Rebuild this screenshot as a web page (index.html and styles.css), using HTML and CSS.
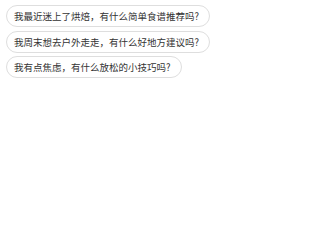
FILE: index.html
```html
<!DOCTYPE html>
<html lang="zh">
<head>
<meta charset="utf-8">
<link rel="stylesheet" href="styles.css">
</head>
<body>
<div class="suggestions">
  <div class="chip">我最近迷上了烘焙，有什么简单食谱推荐吗?</div>
  <div class="chip">我周末想去户外走走，有什么好地方建议吗?</div>
  <div class="chip">我有点焦虑，有什么放松的小技巧吗?</div>
</div>
</body>
</html>
```
FILE: styles.css
```css
html, body {
  margin: 0;
  padding: 0;
  background: #ffffff;
}
body {
  font-family: "Noto Sans CJK SC", "Noto Sans", sans-serif;
  color: #333333;
}
.suggestions {
  display: flex;
  flex-direction: column;
  align-items: flex-start;
  gap: 3.5px;
  padding: 5px 0 0 6px;
}
.chip {
  box-sizing: border-box;
  height: 22px;
  line-height: 20px;
  font-size: 9.5px;
  padding: 0 10px 0 7px;
  border: 1px solid #dedede;
  border-radius: 11px;
  white-space: nowrap;
}
```
